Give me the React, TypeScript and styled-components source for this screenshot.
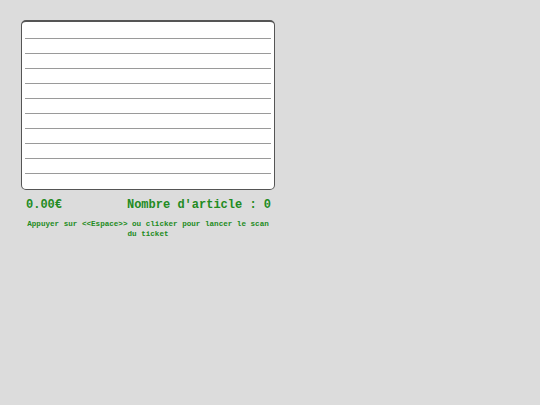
import React from "react";
import styled, { createGlobalStyle } from "styled-components";

const Global = createGlobalStyle`
  html, body { margin: 0; padding: 0; background: #dcdcdc; }
  body { font-family: "Liberation Mono", "Courier New", monospace; }
`;

const Page = styled.div`
  padding: 20px 0 0 21px;
  width: 254px;
`;

const Ticket = styled.div`
  box-sizing: border-box;
  height: 170px;
  background: #fff;
  border: 1px solid #555;
  border-top-width: 2px;
  border-radius: 5px;
  padding: 2px 3px 15px 3px;
`;

const Line = styled.div`
  height: 14px;
  border-bottom: 1px solid #9a9a9a;
`;

const Summary = styled.div`
  display: flex;
  justify-content: space-between;
  padding: 0 4px 0 5px;
  margin-top: 8px;
  font-size: 12px;
  line-height: 14px;
  font-weight: bold;
  color: #228b22;
`;

const Hint = styled.div`
  margin-top: 7px;
  text-align: center;
  font-size: 7.6px;
  line-height: 10px;
  font-weight: bold;
  color: #228b22;
`;

export default function App() {
  const lines = Array.from({ length: 10 }, (_, i) => i);
  return (
    <>
      <Global />
      <Page>
        <Ticket>
          {lines.map((i) => (
            <Line key={i} />
          ))}
        </Ticket>
        <Summary>
          <span>0.00€</span>
          <span>Nombre d'article : 0</span>
        </Summary>
        <Hint>
          Appuyer sur &lt;&lt;Espace&gt;&gt; ou clicker pour lancer le scan
          <br />
          du ticket
        </Hint>
      </Page>
    </>
  );
}
